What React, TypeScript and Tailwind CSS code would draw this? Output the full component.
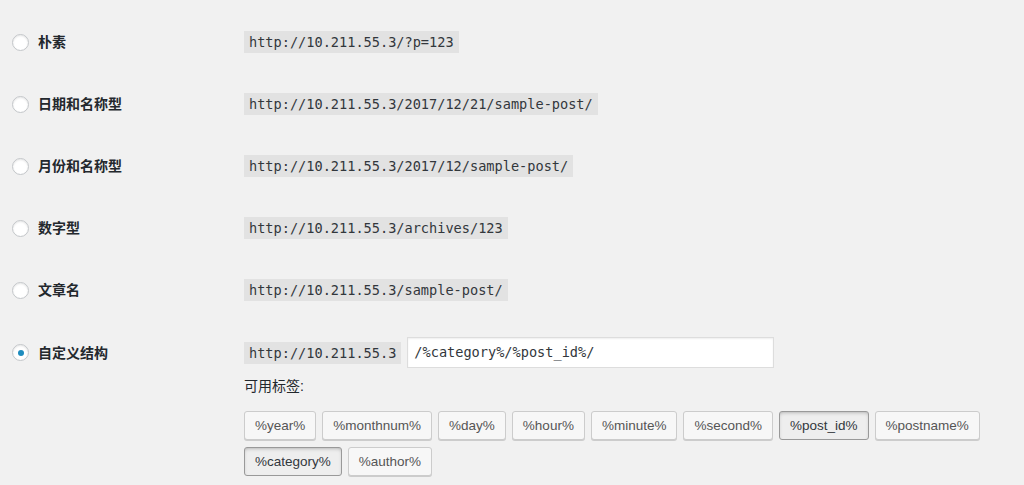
import { useState } from "react";

const sans = "font-['Liberation_Sans','Noto_Sans_CJK_SC',sans-serif]";
const mono = "font-['DejaVu_Sans_Mono','Liberation_Mono',monospace]";

const options = [
  { id: "plain", label: "朴素", url: "http://10.211.55.3/?p=123" },
  { id: "day", label: "日期和名称型", url: "http://10.211.55.3/2017/12/21/sample-post/" },
  { id: "month", label: "月份和名称型", url: "http://10.211.55.3/2017/12/sample-post/" },
  { id: "numeric", label: "数字型", url: "http://10.211.55.3/archives/123" },
  { id: "postname", label: "文章名", url: "http://10.211.55.3/sample-post/" },
];

const tags = [
  "%year%",
  "%monthnum%",
  "%day%",
  "%hour%",
  "%minute%",
  "%second%",
  "%post_id%",
  "%postname%",
  "%category%",
  "%author%",
];

const activeTags = ["%post_id%", "%category%"];

function Radio({ checked }: { checked: boolean }) {
  return (
    <span className="flex h-[17px] w-[17px] shrink-0 items-center justify-center rounded-full border border-[#c3c6c9] bg-white shadow-[inset_0_1px_2px_rgba(0,0,0,0.1)]">
      {checked && <span className="h-[6px] w-[6px] rounded-full bg-[#1e8cbe]" />}
    </span>
  );
}

function Code({ children }: { children: string }) {
  return (
    <code className={`${mono} bg-[#e2e2e2] px-[5px] text-[13.6px] leading-[22px] text-[#32373c]`}>
      {children}
    </code>
  );
}

export default function App() {
  const [selected] = useState("custom");
  const [structure] = useState("/%category%/%post_id%/");

  return (
    <div className={`${sans} min-h-[485px] w-full bg-[#f1f1f1] pt-[11px] text-[#23282d]`}>
      {options.map((opt) => (
        <div key={opt.id} className="flex h-[62px] items-center">
          <div className="flex w-[244px] items-center gap-[9px] pl-[12px]">
            <Radio checked={selected === opt.id} />
            <span className="text-[14px] font-bold leading-[20px]">{opt.label}</span>
          </div>
          <Code>{opt.url}</Code>
        </div>
      ))}

      {/* Custom structure */}
      <div className="flex items-start pt-[16px]">
        <div className="flex h-[31px] w-[244px] items-center gap-[9px] pl-[12px]">
          <Radio checked={selected === "custom"} />
          <span className="text-[14px] font-bold leading-[20px]">自定义结构</span>
        </div>
        <div className="flex flex-col">
          <div className="flex items-center gap-[6px]">
            <Code>http://10.211.55.3</Code>
            <div
              className={`${mono} h-[31px] w-[367px] border border-[#dddddd] bg-white px-[6px] text-[13.6px] leading-[29px] text-[#32373c] shadow-[inset_0_1px_2px_rgba(0,0,0,0.07)]`}
            >
              {structure}
            </div>
          </div>
          <div className="mt-[8px] text-[14px] leading-[20px] text-[#23282d]">可用标签:</div>
          <div className="mt-[15px] flex w-[760px] flex-wrap gap-x-[6px] gap-y-[7px]">
            {tags.map((tag) => {
              const active = activeTags.includes(tag);
              return (
                <button
                  key={tag}
                  className={
                    active
                      ? "h-[29px] rounded-[3px] border border-[#999999] bg-[#eeeeee] px-[10px] text-[13.5px] leading-[27px] text-[#32373c] shadow-[inset_0_2px_5px_-3px_rgba(0,0,0,0.5)]"
                      : "h-[29px] rounded-[3px] border border-[#cccccc] bg-[#f7f7f7] px-[10px] text-[13.5px] leading-[27px] text-[#555555] shadow-[0_1px_0_#cccccc]"
                  }
                >
                  {tag}
                </button>
              );
            })}
          </div>
        </div>
      </div>
    </div>
  );
}
